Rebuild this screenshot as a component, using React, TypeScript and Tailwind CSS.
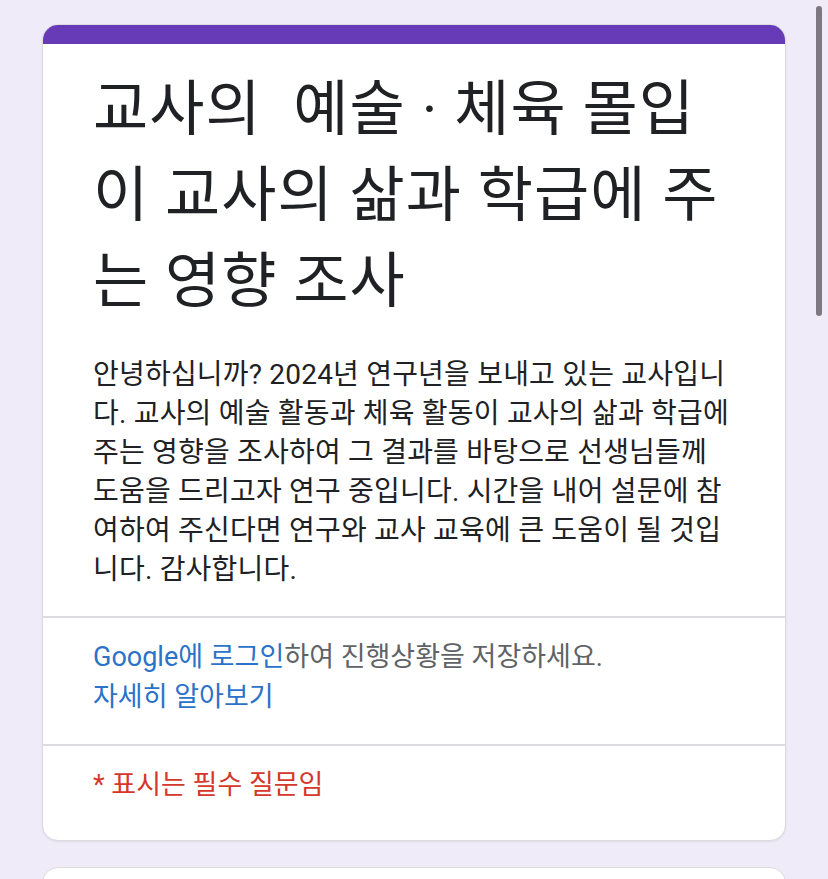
import React from 'react'

const titleLines = ['교사의  예술 · 체육 몰입', '이 교사의 삶과 학급에 주', '는 영향 조사']

const descLines = [
  '안녕하십니까? 2024년 연구년을 보내고 있는 교사입니',
  '다. 교사의 예술 활동과 체육 활동이 교사의 삶과 학급에',
  '주는 영향을 조사하여 그 결과를 바탕으로 선생님들께',
  '도움을 드리고자 연구 중입니다. 시간을 내어 설문에 참',
  '여하여 주신다면 연구와 교사 교육에 큰 도움이 될 것입',
  '니다. 감사합니다.',
]

export default function App() {
  return (
    <div className="relative min-h-screen bg-[#f0ebf8] font-['Roboto','Noto_Sans_CJK_KR',sans-serif] overflow-hidden">
      {/* scrollbar */}
      <div className="absolute right-[6px] top-[6px] h-[310px] w-[6px] rounded-full bg-[#7d7880]" />

      <div className="flex flex-col gap-[26px] px-[42px] pt-[24px]">
        {/* Header card */}
        <div className="rounded-[16px] bg-white border-[1.5px] border-[#dadce0] shadow-[0_1px_2px_rgba(0,0,0,0.08)] overflow-hidden">
          <div className="h-[20px] bg-[#673ab7] -mx-px -mt-px" />

          <div className="pl-[50px] pr-[10px] pt-[23px] pb-[27px]">
            <h1 className="text-[60px] leading-[86px] tracking-[1px] text-[#202124] font-normal whitespace-pre">
              {titleLines.map((line) => (
                <div key={line}>{line}</div>
              ))}
            </h1>
            <p className="mt-[30px] text-[28px] leading-[39px] tracking-[0.2px] text-[#202124] whitespace-nowrap">
              {descLines.map((line) => (
                <span key={line} className="block">
                  {line}
                </span>
              ))}
            </p>
          </div>

          <div className="border-t-2 border-[#dadce0] pl-[50px] pr-[20px] pt-[19px] pb-[27px] text-[27px] leading-[40px]">
            <div className="text-[#5f6368]">
              <a className="text-[#2b72c9]">Google에 로그인</a>하여 진행상황을 저장하세요.
            </div>
            <div>
              <a className="text-[#2b72c9]">자세히 알아보기</a>
            </div>
          </div>

          <div className="border-t-2 border-[#dadce0] pl-[50px] pr-[20px] pt-[19px] pb-[35px] text-[27px] leading-[40px] text-[#d5372b]">
            * 표시는 필수 질문임
          </div>
        </div>

        {/* Next card */}
        <div className="h-[120px] rounded-[16px] bg-white border-[1.5px] border-[#dadce0]" />
      </div>
    </div>
  )
}
